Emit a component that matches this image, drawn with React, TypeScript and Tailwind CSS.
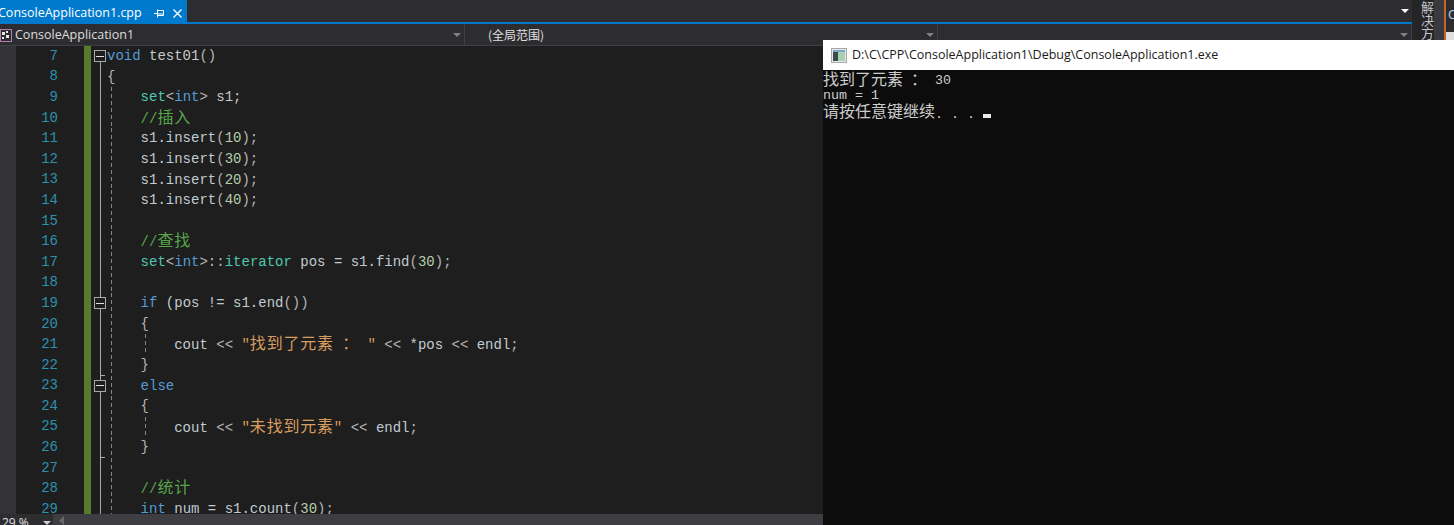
const KW = "text-[#569cd6]";
const TY = "text-[#4ec9b0]";
const TX = "text-[#c8c8c8]";
const VAR = "text-[#c0ccd2]";
const OP = "text-[#b4b4b4]";
const NUM = "text-[#b5cea8]";
const CM = "text-[#57a64a]";
const ST = "text-[#d69d5e]";

type Token = [string, string, boolean?];

type Line = {
  no: number;
  tokens: Token[];
  fold?: boolean;
  end?: boolean;
  guide?: boolean;
  inner?: boolean;
};

const ind = "    ";

const lines: Line[] = [
  { no: 7, fold: true, tokens: [[KW, "void"], [TX, " test01"], [OP, "()"]] },
  { no: 8, tokens: [[OP, "{"]] },
  { no: 9, guide: true, tokens: [[TX, ind], [TY, "set"], [OP, "<"], [KW, "int"], [OP, ">"], [TX, " s1;"]] },
  { no: 10, guide: true, tokens: [[TX, ind], [CM, "//"], [CM, "插入", true]] },
  { no: 11, guide: true, tokens: [[TX, ind], [VAR, "s1.insert"], [OP, "("], [NUM, "10"], [OP, ");"]] },
  { no: 12, guide: true, tokens: [[TX, ind], [VAR, "s1.insert"], [OP, "("], [NUM, "30"], [OP, ");"]] },
  { no: 13, guide: true, tokens: [[TX, ind], [VAR, "s1.insert"], [OP, "("], [NUM, "20"], [OP, ");"]] },
  { no: 14, guide: true, tokens: [[TX, ind], [VAR, "s1.insert"], [OP, "("], [NUM, "40"], [OP, ");"]] },
  { no: 15, guide: true, tokens: [] },
  { no: 16, guide: true, tokens: [[TX, ind], [CM, "//"], [CM, "查找", true]] },
  { no: 17, guide: true, tokens: [[TX, ind], [TY, "set"], [OP, "<"], [KW, "int"], [OP, ">::"], [TY, "iterator"], [VAR, " pos = s1.find"], [OP, "("], [NUM, "30"], [OP, ");"]] },
  { no: 18, guide: true, tokens: [] },
  { no: 19, guide: true, fold: true, tokens: [[TX, ind], [KW, "if"], [VAR, " (pos != s1.end"], [OP, "())"]] },
  { no: 20, guide: true, tokens: [[OP, ind + "{"]] },
  { no: 21, guide: true, inner: true, tokens: [[VAR, ind + ind + "cout"], [OP, " << "], [ST, "\""], [ST, "找到了元素", true], [ST, " "], [ST, "：", true], [ST, " \""], [OP, " << "], [VAR, "*pos"], [OP, " << "], [VAR, "endl"], [OP, ";"]] },
  { no: 22, guide: true, end: true, tokens: [[OP, ind + "}"]] },
  { no: 23, guide: true, fold: true, tokens: [[TX, ind], [KW, "else"]] },
  { no: 24, guide: true, tokens: [[OP, ind + "{"]] },
  { no: 25, guide: true, inner: true, tokens: [[VAR, ind + ind + "cout"], [OP, " << "], [ST, "\""], [ST, "未找到元素", true], [ST, "\""], [OP, " << "], [VAR, "endl"], [OP, ";"]] },
  { no: 26, guide: true, end: true, tokens: [[OP, ind + "}"]] },
  { no: 27, guide: true, tokens: [] },
  { no: 28, guide: true, tokens: [[TX, ind], [CM, "//"], [CM, "统计", true]] },
  { no: 29, guide: true, tokens: [[TX, ind], [KW, "int"], [VAR, " num = s1.count"], [OP, "("], [NUM, "30"], [OP, ");"]] },
];

function Caret({ className }: { className: string }) {
  return (
    <svg width="8" height="4" viewBox="0 0 8 4" className={className}>
      <path d="M0 0h8L4 4z" fill="currentColor" />
    </svg>
  );
}

function CodeRow({ line }: { line: Line }) {
  return (
    <div className="flex h-[20.6px] shrink-0 items-center">
      <div className="w-[16px] self-stretch bg-[#333337]" />
      <div className="w-[42px] text-right text-[#2b91af]">{line.no}</div>
      <div className="w-[26px]" />
      <div className="w-[7px] self-stretch bg-[#587a2e]" />
      <div className="relative w-[16px] self-stretch">
        <div
          className={
            line.no === 7
              ? "absolute bottom-0 left-[9px] top-1/2 w-px bg-[#a8a8a8]"
              : "absolute bottom-0 left-[9px] top-0 w-px bg-[#a8a8a8]"
          }
        />
        {line.end && <div className="absolute bottom-0 left-[9px] h-px w-[5px] bg-[#a8a8a8]" />}
        {line.fold && (
          <div className="absolute left-[3px] top-[4px] flex h-[12px] w-[12px] items-center justify-center border border-[#a8a8a8] bg-[#1e1e1e]">
            <div className="h-px w-[8px] bg-[#e0e0e0]" />
          </div>
        )}
      </div>
      <div className="relative flex-1 self-stretch whitespace-pre leading-[20.6px]">
        {line.guide && (
          <div className="absolute bottom-0 left-[4px] top-0 w-px bg-[repeating-linear-gradient(to_bottom,#858585_0,#858585_4px,transparent_4px,transparent_7px)]" />
        )}
        {line.inner && (
          <div className="absolute bottom-0 left-[38px] top-0 w-px bg-[repeating-linear-gradient(to_bottom,#858585_0,#858585_4px,transparent_4px,transparent_7px)]" />
        )}
        {line.tokens.map(([color, text, cjk], i) =>
          cjk ? (
            <span key={i} className={`${color} font-['Noto_Sans_CJK_SC',sans-serif] text-[16px] leading-none tracking-[0.8px]`}>
              {text}
            </span>
          ) : (
            <span key={i} className={color}>
              {text}
            </span>
          )
        )}
      </div>
    </div>
  );
}

function TabBar() {
  return (
    <div className="flex h-[22px] shrink-0 items-stretch bg-[#2d2d30]">
      <div className="flex w-[187px] items-center overflow-hidden bg-[#007acc] pt-[5px] text-white">
        <span className="-ml-[2px] whitespace-nowrap font-['Open_Sans',sans-serif] text-[12.5px]">
          ConsoleApplication1.cpp
        </span>
        <svg width="10" height="9" viewBox="0 0 10 9" className="ml-[12px]" fill="none" stroke="white">
          <path d="M0 4.500h3M3.500 0.500v8M3.500 1.500h6v5h-6M4 5h5" />
        </svg>
        <svg width="9" height="9" viewBox="0 0 9 9" className="ml-[9px]" fill="none" stroke="white" strokeWidth="1.3">
          <path d="M0.500 0.500l8 8M8.500 0.500l-8 8" />
        </svg>
      </div>
      <div className="flex flex-1 items-center justify-end pr-[3px]">
        <Caret className="text-white" />
      </div>
    </div>
  );
}

function NavCell({ className, children }: { className: string; children?: React.ReactNode }) {
  return (
    <div className={`flex items-center border-r border-[#3f3f46] bg-[#2d2d30] ${className}`}>
      <div className="flex min-w-0 flex-1 items-center pt-[1px]">{children}</div>
      <Caret className="mr-[3px] text-[#808080]" />
    </div>
  );
}

function NavBar() {
  return (
    <div className="flex h-[22px] shrink-0 gap-[2px] border-b border-[#3f3f46] bg-[#2d2d30] font-['Open_Sans',sans-serif] text-[12px] text-[#e0e0e0]">
      <NavCell className="w-[465px]">
        <svg width="12" height="13" viewBox="0 0 12 13" className="shrink-0">
          <rect x="0.5" y="0.5" width="11" height="12" fill="none" stroke="#b080b0" />
          <path d="M2 3h3v3H2zM6 6h3v3H6zM6 2h2v2H6zM2 8h2v2H2z" fill="#e8e8e8" />
        </svg>
        <span className="ml-[3px] font-['Open_Sans',sans-serif] text-[12.5px] text-[#dcdcdc]">ConsoleApplication1</span>
      </NavCell>
      <NavCell className="w-[471px]">
        <span className="ml-[21px] font-['Noto_Sans_CJK_SC',sans-serif]">(全局范围)</span>
      </NavCell>
      <NavCell className="flex-1" />
    </div>
  );
}

function StatusBar() {
  return (
    <div className="flex h-[11px] shrink-0 overflow-hidden bg-[#3e3e42]">
      <div className="flex w-[53px] items-start bg-[#2d2d30] text-[#e0e0e0]">
        <span className="ml-[2px] mt-[1px] font-['Open_Sans',sans-serif] text-[12px] leading-[16px]">29 %</span>
        <Caret className="ml-auto mr-[2px] mt-[7px] text-[#d0d0d0]" />
      </div>
      <svg width="6" height="9" viewBox="0 0 6 9" className="ml-[6px] mt-[2px]">
        <path d="M5 0v9L0 4.500z" fill="#686868" />
      </svg>
    </div>
  );
}

function SideRail() {
  return (
    <div className="flex w-[42px] shrink-0 bg-[#252526]">
      <div className="w-[8px]" />
      <div className="w-[14px] overflow-hidden">
        <div className="mt-[1px] whitespace-nowrap font-['Noto_Sans_CJK_SC',sans-serif] text-[13px] leading-[14px] text-[#c4c4cc] [writing-mode:vertical-rl]">
          解决方案资源管理器
        </div>
      </div>
      <div className="w-[10px] bg-[#3a3a3e]" />
      <div className="flex w-[10px] flex-col border-l-2 border-[#c8642a]">
        <div className="h-[32px] bg-[#2d2d30] pl-[2px] pt-[5px] font-['Open_Sans',sans-serif] text-[13px] leading-[18px] text-[#9fd4ff]">
          C
        </div>
        <div className="flex-1 bg-[#dedede]" />
      </div>
    </div>
  );
}

function ConsoleWindow() {
  return (
    <div className="absolute bottom-0 left-[823px] right-0 top-[40px] flex flex-col bg-[#0c0c0c]">
      <div className="flex h-[30px] shrink-0 items-center bg-white pl-[8px]">
        <svg width="16" height="15" viewBox="0 0 16 15" className="shrink-0">
          <rect x="0.5" y="0.5" width="15" height="14" fill="#e8e8e8" stroke="#a8a8a8" />
          <rect x="2" y="2" width="12" height="2" fill="#7aa6c8" />
          <rect x="2" y="4" width="5" height="9" fill="#3c4a50" />
          <rect x="7" y="4" width="7" height="9" fill="#a6d0b0" />
        </svg>
        <span className="ml-[5px] font-['Open_Sans',sans-serif] text-[12.5px] text-[#1a1a1a]">
          D:\C\CPP\ConsoleApplication1\Debug\ConsoleApplication1.exe
        </span>
      </div>
      <div className="whitespace-pre font-['Liberation_Mono',monospace] text-[13.33px] leading-[16.5px] text-[#cccccc]">
        <div className="flex h-[16.5px] items-center">
          <span className="font-['Noto_Sans_CJK_SC',sans-serif] text-[16px] leading-none">找到了元素</span>
          <span> </span>
          <span className="font-['Noto_Sans_CJK_SC',sans-serif] text-[16px] leading-none">：</span>
          <span className="pt-[6px]"> 30</span>
        </div>
        <div className="h-[16.5px] pt-[1px]">num = 1</div>
        <div className="-mt-[1px] flex h-[16.5px] items-center">
          <span className="font-['Noto_Sans_CJK_SC',sans-serif] text-[16px] leading-none">请按任意键继续</span>
          <span className="pt-[9px]">. . . </span>
          <span className="mt-[11px] h-[4px] w-[8px] bg-[#e8e8e8]" />
        </div>
      </div>
    </div>
  );
}

export default function App() {
  return (
    <div className="relative flex h-[525px] w-[1454px] overflow-hidden bg-[#2d2d30]">
      <div className="flex min-w-0 flex-1 flex-col">
        <TabBar />
        <div className="h-[2px] shrink-0 bg-[#007acc]" />
        <NavBar />
        <div className="flex min-h-0 flex-1 flex-col overflow-hidden bg-[#1e1e1e] font-['Liberation_Mono',monospace] text-[14px]">
          {lines.map((line) => (
            <CodeRow key={line.no} line={line} />
          ))}
        </div>
        <StatusBar />
      </div>
      <SideRail />
      <ConsoleWindow />
    </div>
  );
}
